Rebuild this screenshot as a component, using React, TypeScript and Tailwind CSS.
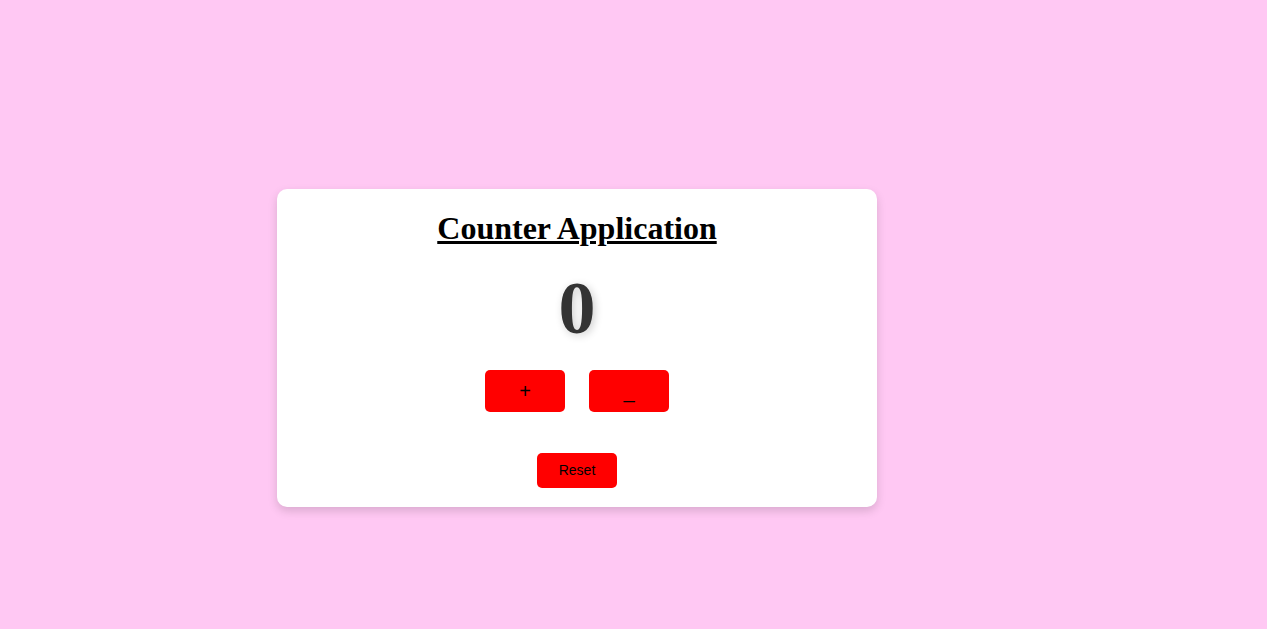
import React, { useState } from 'react';

export default function App() {
  const [count, setCount] = useState(0);

  return (
    <div className="h-[696px] flex items-center bg-[#ffc8f3]">
      <div className="ml-[277px] w-[600px] bg-white rounded-[10px] shadow-[0_4px_10px_rgba(0,0,0,0.15)] pt-[21px] pb-[19px] flex flex-col items-center">
        <h1 className="text-[32px] font-bold underline text-black font-['Liberation_Serif','Times_New_Roman',serif] leading-[1.15]">
          Counter Application
        </h1>
        <p className="mt-[19px] text-[74px] font-bold text-[#333333] font-['Liberation_Serif','Times_New_Roman',serif] leading-[1.15] [text-shadow:2px_2px_8px_rgba(0,0,0,0.2)]">
          {count}
        </p>
        <div className="mt-[19px] flex gap-[24px]">
          <button
            onClick={() => setCount(count + 1)}
            className="w-[80px] h-[42px] bg-[#ff0000] rounded-[5px] text-black text-[20px] font-['Liberation_Sans',Arial,sans-serif] flex items-center justify-center"
          >
            +
          </button>
          <button
            onClick={() => setCount(count - 1)}
            className="w-[80px] h-[42px] bg-[#ff0000] rounded-[5px] text-black text-[20px] font-['Liberation_Sans',Arial,sans-serif] flex items-center justify-center"
          >
            _
          </button>
        </div>
        <button
          onClick={() => setCount(0)}
          className="mt-[41px] w-[80px] h-[35px] bg-[#ff0000] rounded-[5px] text-black text-[14px] font-['Liberation_Sans',Arial,sans-serif]"
        >
          Reset
        </button>
      </div>
    </div>
  );
}
